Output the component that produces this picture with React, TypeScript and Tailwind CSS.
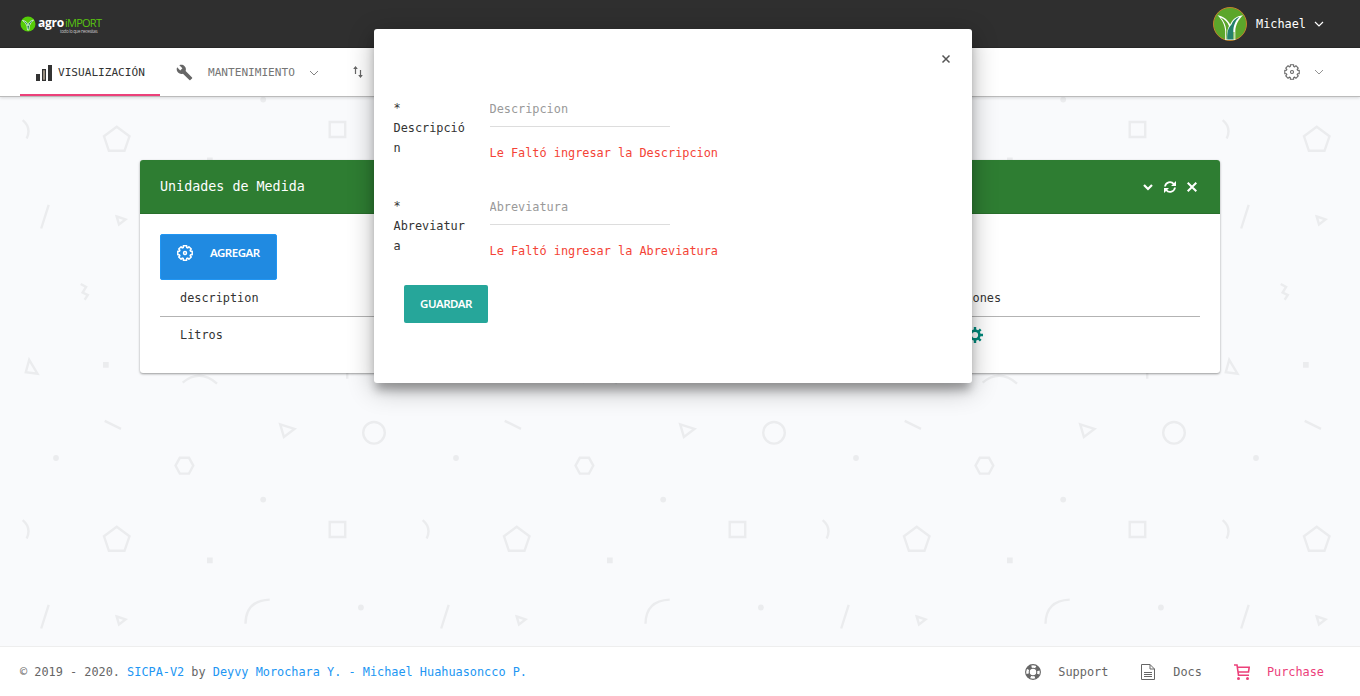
import React from "react";
import { MdBuild } from "react-icons/md";

const Chevron = ({ className = "", width = 1.2 }: { className?: string; width?: number }) => (
  <svg viewBox="0 0 10 10" className={"h-2.5 w-2.5 " + className} fill="none" stroke="currentColor" strokeWidth={width}>
    <path d="M1 3l4 4 4-4" />
  </svg>
);

function gearPath(): string {
  const points: string[] = [];
  const at = (r: number, deg: number) => {
    const a = (deg * Math.PI) / 180;
    points.push(`${(8 + r * Math.cos(a)).toFixed(2)} ${(8 + r * Math.sin(a)).toFixed(2)}`);
  };
  for (let i = 0; i < 8; i++) {
    const c = i * 45;
    at(5.8, c - 17);
    at(7.4, c - 13);
    at(7.4, c + 13);
    at(5.8, c + 17);
  }
  return "M" + points.join("L") + "Z";
}

const Gear = ({ className = "", width = 1.1 }: { className?: string; width?: number }) => (
  <svg viewBox="0 0 16 16" className={"h-4 w-4 " + className} fill="none" stroke="currentColor" strokeWidth={width} strokeLinejoin="round">
    <path d={gearPath()} />
    <circle cx="8" cy="8" r="1.5" />
  </svg>
);

const SolidCog = () => (
  <svg viewBox="0 0 16 16" className="mb-0.5 h-4 w-4 text-[#00897b]" fill="none" stroke="currentColor">
    <circle cx="8" cy="8" r="4.4" strokeWidth="2.6" />
    <path d="M8 0v3M8 13v3M0 8h3M13 8h3M2.3 2.3l2.2 2.2M11.5 11.5l2.2 2.2M2.3 13.7l2.2-2.2M11.5 4.5l2.2-2.2" strokeWidth="2.4" />
  </svg>
);

const Backdrop = () => (
  <svg className="absolute inset-0 h-full w-full text-[#ebecee]" fill="none" stroke="currentColor" strokeWidth="2.4">
    {[-400, 0].map((dy) =>
      [0, 400, 800, 1200].map((dx) => (
        <g key={`${dx}:${dy}`} transform={`translate(${dx - 0.3} ${dy - 0.2})`}>
          <path d="M105 421l16.300 8M49 605l-7.500 23.700M347.500 368v11" />
          <path d="M280.500 424.500l14.300 4.600-10.600 8zM117 616.700l8.800 2.900-6.500 5zM29.500 360l8.300 13.900-11.700-1.500z" />
          <path d="M175.800 465.800l4.300-7.800h9.200l4.300 7.800-4.300 8h-9.200z" />
          <path d="M117 527l12.800 9.500-5 14.500h-15.600l-4.900-14.500z" />
          <path d="M330 522.200h15.500v15h-15.500z" />
          <path d="M23 520.300q9 7.500 4 18.500M270 599.800q-24 1-24.200 24.200M183 382.800q17-14 34.300 1" />
          <path d="M81 284.200l5.400 3-3.500 5.600 5.200 2.500-3.200 4.700" />
          <circle cx="374.300" cy="433" r="10.800" />
          <g fill="currentColor" stroke="none">
            <circle cx="56.300" cy="458.200" r="2.900" />
            <circle cx="263.500" cy="499.800" r="2.900" />
            <circle cx="361.200" cy="607.700" r="2.900" />
            <path d="M207.300 557.700h5.700v5.700h-5.700zM103.300 362.200h5.700v5.700h-5.700z" />
          </g>
        </g>
      ))
    )}
  </svg>
);

const Logo = () => (
  <div className="flex items-center gap-[2px]">
    <svg viewBox="0 0 16 16" className="h-4 w-4">
      <circle cx="8" cy="8" r="7.500" fill="#55cc08" />
      <path d="M2.500 4.500q5 .5 5.500 5.500.5-5 5.500-6-3 2.500-4 5.500L8.800 14H7.500L7 10Q6 6.500 2.500 4.500z" fill="#0f6b4c" stroke="#e5ffe0" strokeWidth=".8" />
    </svg>
    <div className="whitespace-nowrap font-['Open_Sans',sans-serif]">
      <div className="flex h-[10px] items-center">
        <span className="w-[27px] text-[12px] font-bold leading-[10px] tracking-[-0.250px] text-white">agro</span>
        <span className="text-[11px] leading-[10px] tracking-[-0.750px] text-[#59c40f]">iMPORT</span>
      </div>
      <div className="-mb-1 ml-[22px] h-[6px] text-[4.500px] leading-[6px] tracking-[-0.350px] text-[#c4c4c4]">todo lo que necesitas</div>
    </div>
  </div>
);

const Avatar = () => (
  <svg viewBox="0 0 34 34" className="h-[34px] w-[34px]">
    <circle cx="17" cy="17" r="16.500" fill="#5ca62b" stroke="#c3812c" />
    <path d="M4.500 8.200C11 9.500 14.500 12.500 17.200 17.500 19.500 12.500 23 9 30 8.200 25 13 22.700 18 22.300 24v9H12.200v-9C11.800 18 9.500 13 4.500 8.200z" fill="#fff" />
    <path d="M7.500 10.400C12 12 14.500 15 16 19c-1.500 3-2 6-2.200 13.500h-.6V23C12.800 18 11 14 7.500 10.400z" fill="#5ca62b" />
    <path d="M18.500 17.500C20 13.500 22.500 11 26.500 9.700 22 14 20.500 19 20.300 24v8.500h-6.100C14 24 15.500 20.500 18.500 17.500z" fill="#24806b" />
    <path d="M20.900 32.500V25" stroke="#5ca62b" strokeWidth="1" />
  </svg>
);

function Field({ label, placeholder, error }: { label: string; placeholder: string; error: string }) {
  return (
    <div className="flex h-[98px]">
      <label className="w-[76px] shrink-0 break-all pr-[2px] leading-5 text-[#333]">
        <span className="block">*</span>
        {label}
      </label>
      <div className="ml-5 flex flex-col">
        <input
          placeholder={placeholder}
          className="h-[29px] w-[180px] border-b border-[#ddd] pb-[6px] pt-0 outline-none placeholder:text-[#999] placeholder:opacity-100"
        />
        <span className="mt-[16px] whitespace-nowrap leading-5 text-[#f44336]">{error}</span>
      </div>
    </div>
  );
}

export default function App() {
  return (
    <div className="relative flex h-[696px] w-[1360px] flex-col overflow-hidden bg-[#f9fafc] font-['DejaVu_Sans_Mono',monospace] text-[11.870px] leading-5 text-[#333]">
      <Backdrop />

      <header className="relative flex h-12 shrink-0 items-center justify-between border-b border-[#282828] bg-[#2f2f2f] px-5">
        <Logo />
        <div className="flex items-center pr-4 text-white">
          <Avatar />
          <span className="ml-[9px]">Michael</span>
          <Chevron className="ml-2" />
        </div>
      </header>

      <nav className="relative flex h-[49px] shrink-0 items-stretch border-b border-[#bbb] bg-white px-5 text-[11.100px] shadow-[0_1px_3px_rgba(0,0,0,.14)]">
        <a className="flex w-[140px] items-center border-b-2 border-[#ec407a] pl-4 pt-[3px]">
          <svg viewBox="0 0 16 16" className="h-4 w-4">
            <path d="M0 9h4v7H0zM12 0h4v16h-4z" fill="#333" />
            <path d="M6.600 4.600h2.800v10.800H6.600z" fill="#b5a795" stroke="#333" strokeWidth="1.200" />
          </svg>
          <span className="ml-[6px]">VISUALIZACIÓN</span>
        </a>
        <a className="flex items-center pl-4 pt-[1px] text-[#757575]">
          <MdBuild className="h-[17px] w-[17px] text-[#666]" />
          <span className="ml-[15px]">MANTENIMIENTO</span>
          <Chevron className="ml-[14px]" width={0.9} />
        </a>
        <a className="flex items-center pl-[32px] text-[#666]">
          <svg viewBox="0 0 14 14" className="h-3.5 w-3.5" fill="none" stroke="currentColor">
            <path d="M4.500 9V2.500M9.500 5v6.500" strokeWidth="1.200" />
            <path d="M4.500 1l2.300 3H2.200zM9.500 13l2.300-3H7.200z" fill="currentColor" stroke="none" />
          </svg>
        </a>
        <div className="ml-auto flex items-center pr-4 text-[#666]">
          <Gear />
          <Chevron className="ml-[14px] text-[#888]" width={0.9} />
        </div>
      </nav>

      <main className="relative flex-1 px-[140px] pt-[63px]">
        <section className="h-[213px] rounded-[3px] bg-white shadow-[0_1px_3px_rgba(0,0,0,.18),0_1px_2px_rgba(0,0,0,.24)]">
          <div className="flex h-[54px] items-center justify-between rounded-t-[3px] border-b border-[#296f2c] bg-[#2e7d32] px-5 text-white">
            <h1 className="text-[13.360px]">Unidades de Medida</h1>
            <div className="flex items-center gap-[11px] pr-[3px]">
              <Chevron width={2.2} />
              <svg viewBox="0 0 12 12" className="h-3 w-3" fill="none" stroke="currentColor" strokeWidth="1.800">
                <path d="M1 5.500A5 5 0 0 1 9.800 3M11 6.500A5 5 0 0 1 2.200 9" />
                <path d="M12 0v5H7zM0 12V7h5z" fill="currentColor" stroke="none" />
              </svg>
              <svg viewBox="0 0 10 10" className="h-2.5 w-2.5" stroke="currentColor" strokeWidth="2">
                <path d="M.7.7l8.600 8.600M9.300.7L.7 9.300" />
              </svg>
            </div>
          </div>
          <div className="px-5 pt-5">
            <button className="flex h-[46px] w-[117px] items-start rounded-[2px] border border-[#2196f3] bg-[#208ae1] pl-4 pt-[9px] text-white">
              <Gear className="mt-[1px]" width={1.5} />
              <span className="ml-[17px] font-['Noto_Sans',sans-serif] text-[11.500px] font-semibold leading-[18px] tracking-[-0.500px]">AGREGAR</span>
            </button>
            <div className="grid h-[37px] grid-cols-[784px_1fr] items-center border-b border-[#b3b3b3] pl-5">
              <span>description</span>
              <span className="-ml-5">Opciones</span>
            </div>
            <div className="grid h-[37px] grid-cols-[787px_1fr] items-center pl-5">
              <span className="pb-0.5">Litros</span>
              <SolidCog />
            </div>
          </div>
        </section>
      </main>

      <footer className="relative flex h-[50px] shrink-0 items-center justify-between border-t border-[#eee] bg-white px-5 text-[#666]">
        <p>
          © 2019 - 2020. <a className="text-[#2196f3]">SICPA-V2</a> by{" "}
          <a className="text-[#2196f3]">Deyvy Morochara Y. - Michael Huahuasoncco P.</a>
        </p>
        <div className="flex items-center pr-4">
          <svg viewBox="0 0 16 16" className="h-4 w-4" fill="none" stroke="currentColor">
            <circle cx="8" cy="8" r="7.400" strokeWidth="1.100" />
            <circle cx="8" cy="8" r="3.800" strokeWidth="1.100" />
            <circle cx="8" cy="8" r="5.700" strokeWidth="3.600" strokeDasharray="4.476 4.476" strokeDashoffset="-2.238" />
          </svg>
          <span className="ml-[17px]">Support</span>
          <svg viewBox="0 0 16 16" className="ml-8 h-4 w-4" fill="none" stroke="currentColor">
            <path d="M1.500.5h8.500l4.500 4.500v10.500h-13zM10 .5V5h4.500M4 8.500h8M4 10.500h8M4 12.500h8" />
          </svg>
          <span className="ml-[17px]">Docs</span>
          <svg viewBox="0 0 16 16" className="ml-8 h-4 w-4 text-[#ec407a]" fill="none" stroke="currentColor" strokeWidth="1.600">
            <path d="M0 1h3l1.500 10.200H15M3.500 3.200H15.200L14.500 8H4.500" />
            <circle cx="4.500" cy="14.500" r="1.500" fill="currentColor" stroke="none" />
            <circle cx="13.500" cy="14.500" r="1.500" fill="currentColor" stroke="none" />
          </svg>
          <span className="ml-[17px] text-[#ec407a]">Purchase</span>
        </div>
      </footer>

      <div
        role="dialog"
        className="absolute left-[374px] top-[29px] flex h-[354px] w-[598px] flex-col rounded-[3px] bg-white pl-5 pt-[25px] shadow-[0_9px_10px_-2px_rgba(0,0,0,.27),0_6px_26px_rgba(0,0,0,.3)]"
      >
        <button className="mr-[21px] self-end text-[#555]">
          <svg viewBox="0 0 10 10" className="h-2.5 w-2.5" stroke="currentColor" strokeWidth="1.500">
            <path d="M1.500 1.500l7 7M8.500 1.500l-7 7" />
          </svg>
        </button>
        <form className="-ml-[0.500px] mt-[34px] flex flex-col">
          <Field label="Descripción" placeholder="Descripcion" error="Le Faltó ingresar la Descripcion" />
          <Field label="Abreviatura" placeholder="Abreviatura" error="Le Faltó ingresar la Abreviatura" />
          <button
            type="button"
            className="-mt-[9px] ml-[10.500px] h-[38px] w-[84px] rounded-[2px] bg-[#26a69a] font-['Noto_Sans',sans-serif] text-[11.500px] font-semibold tracking-[-0.500px] text-white"
          >
            GUARDAR
          </button>
        </form>
      </div>
    </div>
  );
}
